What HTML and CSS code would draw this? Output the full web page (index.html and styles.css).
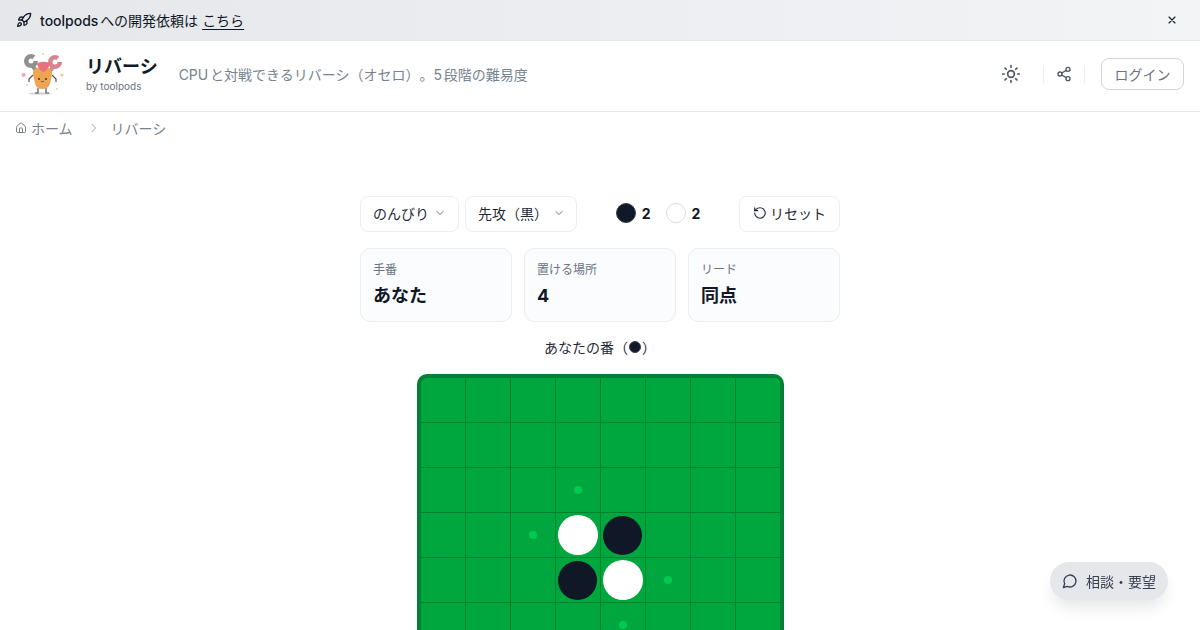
FILE: index.html
```html
<!DOCTYPE html>
<html lang="ja">
<head>
  <meta charset="UTF-8">
  <meta name="viewport" content="width=device-width, initial-scale=1.0">
  <title>リバーシ</title>
  <link rel="stylesheet" href="styles.css">
</head>
<body>
  <div class="banner">
    <div class="banner-text">
      <svg class="rocket" viewBox="0 0 24 24" width="16" height="16" fill="none" stroke="currentColor" stroke-width="2" stroke-linecap="round" stroke-linejoin="round">
        <path d="M4.5 16.5c-1.5 1.26-2 5-2 5s3.74-.5 5-2c.71-.84.7-2.13-.09-2.91a2.18 2.18 0 0 0-2.91-.09z"/>
        <path d="m12 15-3-3a22 22 0 0 1 2-3.95A12.88 12.88 0 0 1 22 2c0 2.72-.78 7.5-6 11a22.35 22.35 0 0 1-4 2z"/>
        <path d="M9 12H4s.55-3.03 2-4c1.62-1.08 5 0 5 0"/>
        <path d="M12 15v5s3.03-.55 4-2c1.08-1.62 0-5 0-5"/>
      </svg>
      <span><b class="banner-name">toolpods</b>への開発依頼は</span>
      <a class="banner-link">こちら</a>
    </div>
    <svg class="close" viewBox="0 0 24 24" width="12" height="12" fill="none" stroke="currentColor" stroke-width="2.2" stroke-linecap="round">
      <path d="M18 6 6 18M6 6l12 12"/>
    </svg>
  </div>

  <header class="header">
    <svg class="logo" viewBox="0 0 46 46" width="46" height="46">
      <ellipse cx="20" cy="42.500" rx="12" ry="1.200" fill="#d4d4d8"/>
      <path d="M18 37v5h-3M26 37v5h3" fill="none" stroke="#555" stroke-width="1.200"/>
      <path d="M13 24 9 28v3M32 24l4 4v3" fill="none" stroke="#555" stroke-width="1.200"/>
      <circle cx="11" cy="10" r="7" fill="#8f8f8f"/>
      <path d="m11 10 7-9h5v9z" fill="#fff"/>
      <circle cx="11" cy="10" r="2.500" fill="#fff"/>
      <path d="m12 14 5 7" stroke="#8f8f8f" stroke-width="4"/>
      <circle cx="35" cy="11" r="7" fill="#d98591"/>
      <path d="m35 11 7-9h4v9z" fill="#fff"/>
      <circle cx="35" cy="11" r="2.500" fill="#fff"/>
      <path d="m34 15-5 6" stroke="#d98591" stroke-width="4"/>
      <path d="M13 22c0-4 4-6 9.500-6S32 18 32 22c0 3-1 5-1.500 8-.6 5-3 8-8 8s-7.400-3-8-8C14 27 13 25 13 22z" fill="#eda552"/>
      <path d="M17 13c2-3 11-3 13 0-1 4-4 7-6.500 8-2.500-1-5.500-4-6.500-8z" fill="#e8707f"/>
      <circle cx="19" cy="28" r="1" fill="#4a3320"/>
      <circle cx="26" cy="28" r="1" fill="#4a3320"/>
      <path d="M21 30c.8 1 2.200 1 3 0" fill="none" stroke="#4a3320" stroke-width=".8"/>
      <circle cx="3.500" cy="24" r="2" fill="#f2a5b8"/>
      <circle cx="42" cy="24" r="1.500" fill="#f0c898"/>
      <circle cx="23" cy="3" r="1" fill="#ecd98a"/>
      <circle cx="37" cy="38" r="1" fill="#ecd98a"/>
      <circle cx="7" cy="34" r="1" fill="#c9d6e8"/>
    </svg>
    <div class="brand">
      <div class="brand-title">リバーシ</div>
      <div class="brand-sub">by toolpods</div>
    </div>
    <p class="tagline">CPUと対戦できるリバーシ（オセロ）。5段階の難易度</p>
    <div class="header-actions">
      <svg class="sun" viewBox="0 0 24 24" width="20" height="20" fill="none" stroke="currentColor" stroke-width="2" stroke-linecap="round">
        <circle cx="12" cy="12" r="4"/>
        <path d="M12 2v2M12 20v2M4.930 4.930l1.410 1.410M17.660 17.660l1.410 1.410M2 12h2M20 12h2M6.340 17.660l-1.410 1.410M19.070 4.930l-1.410 1.410"/>
      </svg>
      <span class="divider"></span>
      <svg class="share" viewBox="0 0 24 24" width="16" height="16" fill="none" stroke="currentColor" stroke-width="2" stroke-linecap="round">
        <circle cx="18" cy="5" r="3"/>
        <circle cx="6" cy="12" r="3"/>
        <circle cx="18" cy="19" r="3"/>
        <path d="m8.590 13.510 6.830 3.980M15.410 6.510l-6.820 3.980"/>
      </svg>
      <span class="divider"></span>
      <button class="login">ログイン</button>
    </div>
  </header>

  <nav class="crumbs">
    <svg viewBox="0 0 24 24" width="12" height="12" fill="none" stroke="currentColor" stroke-width="2" stroke-linecap="round" stroke-linejoin="round">
      <path d="M15 21v-8a1 1 0 0 0-1-1h-4a1 1 0 0 0-1 1v8"/>
      <path d="M3 10a2 2 0 0 1 .71-1.530l7-6a2 2 0 0 1 2.580 0l7 6A2 2 0 0 1 21 10v9a2 2 0 0 1-2 2H5a2 2 0 0 1-2-2z"/>
    </svg>
    <span class="crumb-home">ホーム</span>
    <svg class="crumb-sep" viewBox="0 0 24 24" width="14" height="14" fill="none" stroke="currentColor" stroke-width="2" stroke-linecap="round" stroke-linejoin="round">
      <path d="m9 18 6-6-6-6"/>
    </svg>
    <span>リバーシ</span>
  </nav>

  <main class="game">
    <div class="controls">
      <div class="selects">
        <div class="select">のんびり
          <svg viewBox="0 0 24 24" width="12" height="12" fill="none" stroke="currentColor" stroke-width="2" stroke-linecap="round" stroke-linejoin="round"><path d="m6 9 6 6 6-6"/></svg>
        </div>
        <div class="select">先攻（黒）
          <svg viewBox="0 0 24 24" width="12" height="12" fill="none" stroke="currentColor" stroke-width="2" stroke-linecap="round" stroke-linejoin="round"><path d="m6 9 6 6 6-6"/></svg>
        </div>
      </div>
      <div class="scores">
        <span class="score"><i class="stone stone-black"></i>2</span>
        <span class="score"><i class="stone stone-white"></i>2</span>
      </div>
      <button class="reset">
        <svg viewBox="0 0 24 24" width="14" height="14" fill="none" stroke="currentColor" stroke-width="2" stroke-linecap="round" stroke-linejoin="round">
          <path d="M3 12a9 9 0 1 0 9-9 9.750 9.750 0 0 0-6.740 2.740L3 8"/>
          <path d="M3 3v5h5"/>
        </svg>
        リセット
      </button>
    </div>

    <div class="stats">
      <div class="stat">
        <div class="stat-label">手番</div>
        <div class="stat-value">あなた</div>
      </div>
      <div class="stat">
        <div class="stat-label">置ける場所</div>
        <div class="stat-value">4</div>
      </div>
      <div class="stat">
        <div class="stat-label">リード</div>
        <div class="stat-value">同点</div>
      </div>
    </div>

    <p class="status">あなたの番（<i class="status-stone"></i>）</p>

    <div class="board" id="board"></div>
  </main>

  <button class="chat">
    <svg viewBox="0 0 24 24" width="16" height="16" fill="none" stroke="currentColor" stroke-width="2" stroke-linecap="round" stroke-linejoin="round">
      <path d="M7.900 20A9 9 0 1 0 4 16.100L2 22z"/>
    </svg>
    相談・要望
  </button>

  <script>
    const board = document.getElementById('board');

    // . empty, b black, w white, + legal move
    const rows = [
      '........',
      '........',
      '...+....',
      '..+wb...',
      '...bw+..',
      '....+...',
      '........',
      '........'
    ];

    rows.forEach((row) => {
      row.split('').forEach((c) => {
        const cell = document.createElement('div');
        cell.className = 'cell';
        if (c === 'b' || c === 'w') {
          const disc = document.createElement('div');
          disc.className = c === 'b' ? 'disc disc-black' : 'disc disc-white';
          cell.appendChild(disc);
        }
        if (c === '+') {
          const hint = document.createElement('div');
          hint.className = 'hint';
          cell.appendChild(hint);
        }
        board.appendChild(cell);
      });
    });
  </script>
</body>
</html>
```

FILE: styles.css
```css
* {
  margin: 0;
  padding: 0;
  box-sizing: border-box;
}
body {
  height: 100vh;
  overflow: hidden;
  background: #fff;
  color: #111827;
  font-family: Inter, 'Noto Sans CJK JP', sans-serif;
  font-size: 14px;
  text-spacing-trim: space-all;
  text-autospace: normal;
}
button {
  font-family: inherit;
  background: none;
}

/* top banner */
.banner {
  height: 41px;
  padding: 0 22px 0 16px;
  display: flex;
  align-items: center;
  justify-content: space-between;
  background: linear-gradient(90deg, #e5e7eb, #f3f4f6);
  border-bottom: 1px solid #e5e7eb;
}
.banner-text {
  display: flex;
  align-items: center;
  color: #111827;
}
.banner-name {
  font-weight: 500;
}
.rocket {
  margin-right: 8px;
}
.banner-link {
  margin-left: 4px;
  text-decoration: underline;
  text-underline-offset: 3px;
}
.close {
  color: #111827;
}

/* site header */
.header {
  height: 71px;
  padding: 0 16px 4px 20px;
  display: flex;
  align-items: center;
  border-bottom: 1px solid #e5e7eb;
}
.logo {
  margin-right: 20px;
}
.brand-title {
  font-size: 18px;
  line-height: 24px;
  font-weight: 600;
  color: #111827;
}
.brand-sub {
  font-size: 10px;
  line-height: 14px;
  color: #6b7280;
}
.tagline {
  margin-left: 21px;
  color: #76838f;
}
.header-actions {
  margin-left: auto;
  display: flex;
  align-items: center;
  color: #4b5563;
}
.sun {
  margin-right: 22px;
}
.share {
  margin: 0 12px;
}
.divider {
  width: 1px;
  height: 18px;
  background: #eceef1;
}
.login {
  margin-left: 16px;
  width: 83px;
  height: 32px;
  border: 1px solid #d1d5db;
  border-radius: 8px;
  font-size: 14px;
  color: #6b7280;
}

/* breadcrumb */
.crumbs {
  height: 32px;
  padding-left: 15px;
  display: flex;
  align-items: center;
  color: #7a828e;
}
.crumb-home {
  margin-left: 4px;
}
.crumb-sep {
  margin: 0 10px 0 14px;
  color: #c4c8ce;
}

/* game */
.game {
  width: 480px;
  margin: 52px auto 0;
}
.controls {
  height: 36px;
  display: flex;
  align-items: center;
  justify-content: space-between;
}
.selects {
  display: flex;
  gap: 6px;
}
.select {
  height: 36px;
  padding: 0 12px 2px;
  display: flex;
  align-items: center;
  gap: 5px;
  border: 1px solid #eceef1;
  border-radius: 8px;
  color: #1f2937;
}
.select + .select {
  padding-right: 11px;
}
.select svg {
  color: #6b7280;
}
.scores {
  display: flex;
  gap: 15px;
  margin-top: -2px;
}
.score {
  display: flex;
  align-items: center;
  gap: 6px;
  font-weight: 700;
}
.stone {
  width: 20px;
  height: 20px;
  border-radius: 50%;
}
.stone-black {
  background: #111827;
  border: 1px solid #374151;
}
.stone-white {
  background: #fff;
  border: 1px solid #d9dce1;
}
.reset {
  width: 101px;
  height: 36px;
  padding-bottom: 2px;
  display: flex;
  align-items: center;
  justify-content: center;
  gap: 3px;
  border: 1px solid #eceef1;
  border-radius: 8px;
  font-size: 14px;
  color: #1f2937;
}
.stats {
  margin-top: 16px;
  display: grid;
  grid-template-columns: repeat(3, 1fr);
  gap: 12px;
}
.stat {
  height: 74px;
  padding: 13px 12px 0;
  background: #fafcfe;
  border: 1px solid #eceef1;
  border-radius: 10px;
}
.stat-label {
  font-size: 12px;
  line-height: 16px;
  color: #6b7280;
}
.stat-value {
  margin-top: 4px;
  font-size: 18px;
  line-height: 28px;
  font-weight: 700;
  color: #111827;
}
.status {
  margin-top: 16px;
  height: 20px;
  line-height: 20px;
  text-align: center;
  color: #1f2937;
}
.status-stone {
  display: inline-block;
  width: 12px;
  height: 12px;
  margin: 0 1px;
  border-radius: 50%;
  background: #111827;
  border: 1px solid #374151;
}
.board {
  width: 367px;
  margin: 16px auto 0;
  display: grid;
  grid-template-columns: repeat(8, 45px);
  grid-auto-rows: 45px;
  background: #00a63e;
  border: 4px solid #008236;
  border-right-width: 3px;
  border-radius: 10px;
}
.cell {
  display: flex;
  align-items: center;
  justify-content: center;
  border-right: 1px solid #00812f;
  border-bottom: 1px solid #00812f;
}
.disc {
  width: 40px;
  height: 40px;
  border-radius: 50%;
}
.disc-black {
  width: 39px;
  height: 39px;
  background: #101828;
}
.disc-white {
  background: #fff;
}
.hint {
  width: 8px;
  height: 8px;
  border-radius: 50%;
  background: #00c950;
}

/* floating button */
.chat {
  position: fixed;
  right: 32px;
  bottom: 30px;
  width: 118px;
  height: 38px;
  display: flex;
  align-items: center;
  justify-content: center;
  gap: 8px;
  border: none;
  border-radius: 19px;
  background: #e5e7eb;
  box-shadow: 0 10px 15px -3px rgba(0, 0, 0, 0.1);
  font-size: 14px;
  color: #374151;
}
```
